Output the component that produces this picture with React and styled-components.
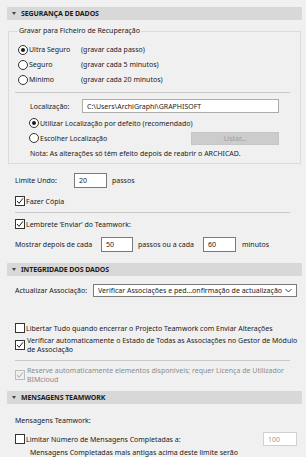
import styled, { createGlobalStyle } from 'styled-components';

const Global = createGlobalStyle`
  html, body {
    margin: 0;
    padding: 0;
    background: #f0f0f0;
  }
  body {
    font-family: "Noto Sans", "Open Sans", sans-serif;
    font-size: 7px;
    color: #1a1a1a;
    overflow: hidden;
  }
`;

const Panel = styled.div`
  width: 306px;
  height: 457px;
  box-sizing: border-box;
  padding: 7px 4px 0 7px;
  display: flex;
  flex-direction: column;
  overflow: hidden;
`;

const Header = styled.div`
  height: 13px;
  flex: none;
  margin-top: ${(p) => p.$mt || 0}px;
  background: #d8d8d8;
  border-radius: 1px;
  display: flex;
  align-items: center;
  gap: 5px;
  padding-left: 5px;
  font-weight: 700;
  font-size: 7px;
  letter-spacing: -0.1px;
  color: #1c1c1c;
`;

const Arrow = styled.span`
  width: 0;
  height: 0;
  border-left: 2.5px solid transparent;
  border-right: 2.5px solid transparent;
  border-top: 3px solid #444;
`;

const Group = styled.fieldset`
  margin: 7px 1px 0 1px;
  padding: 0 10px 4px 6px;
  border: 1px solid #dcdcdc;
  min-width: 0;
`;

const Legend = styled.legend`
  margin-left: 3px;
  padding: 0 1px;
  font-size: 7px;
  line-height: 8px;
  height: 8px;
`;

const Row = styled.div`
  display: flex;
  align-items: center;
  flex: none;
  height: ${(p) => p.$h || 14}px;
  margin-top: ${(p) => p.$mt || 0}px;
  padding-left: ${(p) => p.$pl || 0}px;
  padding-right: ${(p) => p.$pr || 0}px;
  white-space: nowrap;
`;

const TallRow = styled.div`
  display: flex;
  align-items: center;
  flex: none;
  margin-top: ${(p) => p.$mt || 0}px;
  padding-left: ${(p) => p.$pl || 0}px;
`;

const Text = styled.span`
  width: ${(p) => (p.$w ? `${p.$w}px` : 'auto')};
  margin-left: ${(p) => p.$ml || 0}px;
  flex: none;
  color: ${(p) => (p.$disabled ? '#8c8c8c' : 'inherit')};
  line-height: 9px;
`;

const Paragraph = styled.span`
  line-height: 9px;
  margin-left: 1px;
  color: ${(p) => (p.$disabled ? '#8c8c8c' : 'inherit')};
`;

const Rule = styled.div`
  height: 1px;
  flex: none;
  background: #c9c9c9;
  margin: ${(p) => p.$mt || 0}px ${(p) => p.$mr || 0}px 0 ${(p) => p.$ml || 0}px;
`;

const RadioDot = styled.span`
  width: 8px;
  height: 8px;
  flex: none;
  border-radius: 50%;
  border: 1px solid #333;
  background: #fff;
  box-sizing: content-box;
  display: flex;
  align-items: center;
  justify-content: center;
  margin-right: 1px;

  &::after {
    content: '';
    width: 4px;
    height: 4px;
    border-radius: 50%;
    background: ${(p) => (p.$on ? '#1a1a1a' : 'transparent')};
  }
`;

const Box = styled.span`
  width: 8px;
  height: 8px;
  flex: none;
  border: 1px solid ${(p) => (p.$disabled ? '#bcbcbc' : '#333')};
  background: ${(p) => (p.$disabled ? '#f0f0f0' : '#fff')};
  display: flex;
  align-items: center;
  justify-content: center;
  margin-right: 1px;
`;

const Field = styled.div`
  box-sizing: border-box;
  flex: none;
  width: ${(p) => p.$w}px;
  height: ${(p) => p.$h || 15}px;
  margin-left: ${(p) => (p.$push ? 'auto' : '0')};
  background: #fff;
  border: 1px solid ${(p) => (p.$disabled ? '#d0d0d0' : p.$light ? '#adadad' : '#7a7a7a')};
  color: ${(p) => (p.$disabled ? '#9a9a9a' : '#1a1a1a')};
  display: flex;
  align-items: center;
  padding-left: 4px;
`;

const Button = styled.div`
  box-sizing: border-box;
  width: 88px;
  height: 13px;
  margin-left: auto;
  background: #cccccc;
  border: 1px solid #c6c6c6;
  color: #9c9c9c;
  display: flex;
  align-items: center;
  justify-content: center;
`;

const Select = styled.div`
  box-sizing: border-box;
  width: 204px;
  height: 13px;
  flex: none;
  background: #fff;
  border: 1px solid #7a7a7a;
  display: flex;
  align-items: center;
  justify-content: space-between;
  padding: 0 4px;
`;

const Check = ({ disabled }) => (
  <svg width="8" height="8" viewBox="0 0 8 8">
    <polyline
      points="1,4 3,6.3 7,1.3"
      fill="none"
      stroke={disabled ? '#a8a8a8' : '#222'}
      strokeWidth="1"
    />
  </svg>
);

const Checkbox = ({ checked, disabled }) => (
  <Box $disabled={disabled}>{checked && <Check disabled={disabled} />}</Box>
);

const Chevron = () => (
  <svg width="7" height="5" viewBox="0 0 7 5">
    <polyline points="0.5,1 3.5,4 6.5,1" fill="none" stroke="#444" strokeWidth="1" />
  </svg>
);

const radios = [
  { label: 'Ultra Seguro', note: '(gravar cada passo)', on: true },
  { label: 'Seguro', note: '(gravar cada 5 minutos)' },
  { label: 'Mínimo', note: '(gravar cada 20 minutos)' },
];

export default function App() {
  return (
    <>
      <Global />
      <Panel>
        <Header>
          <Arrow />
          SEGURANÇA DE DADOS
        </Header>

        <Group>
          <Legend>Gravar para Ficheiro de Recuperação</Legend>
          {radios.map((r, i) => (
            <Row key={r.label} $h={15} $mt={i === 0 ? 7 : 0} $pl={3}>
              <RadioDot $on={r.on} />
              <Text $w={52}>{r.label}</Text>
              <Text>{r.note}</Text>
            </Row>
          ))}
          <Rule $mt={5} />
          <Row $mt={6} $pl={15} $pr={11}>
            <Text $w={52}>Localização:</Text>
            <Field $w={197} $h={14} $light>
              C:\Users\ArchiGraphi\GRAPHISOFT
            </Field>
          </Row>
          <Row $mt={3} $pl={14} $pr={11}>
            <RadioDot $on />
            <Text>Utilizar Localização por defeito (recomendado)</Text>
          </Row>
          <Row $mt={1} $pl={14} $pr={11}>
            <RadioDot />
            <Text>Escolher Localização</Text>
            <Button>Listar...</Button>
          </Row>
          <Row $h={12} $mt={2} $pl={15}>
            <Text>Nota: As alterações só têm efeito depois de reabrir o ARCHICAD.</Text>
          </Row>
        </Group>

        <Row $h={15} $mt={9} $pl={8}>
          <Text $w={59}>Limite Undo:</Text>
          <Field $w={33}>20</Field>
          <Text $ml={5}>passos</Text>
        </Row>
        <Row $mt={6} $pl={8}>
          <Checkbox checked />
          <Text>Fazer Cópia</Text>
        </Row>
        <Rule $mt={4} $ml={8} $mr={12} />
        <Row $mt={4} $pl={8}>
          <Checkbox checked />
          <Text>Lembrete ‘Enviar’ do Teamwork:</Text>
        </Row>
        <Row $h={15} $mt={6} $pl={8}>
          <Text $w={86}>Mostrar depois de cada</Text>
          <Field $w={32}>50</Field>
          <Text $w={65} $ml={5}>passos ou a cada</Text>
          <Field $w={33}>60</Field>
          <Text $ml={6}>minutos</Text>
        </Row>

        <Header $mt={11}>
          <Arrow />
          INTEGRIDADE DOS DADOS
        </Header>
        <Row $h={13} $mt={8} $pl={8}>
          <Text $w={78}>Actualizar Associação:</Text>
          <Select>
            <span>Verificar Associações e ped...onfirmação de actualização</span>
            <Chevron />
          </Select>
        </Row>
        <Row $mt={24} $pl={8}>
          <Checkbox />
          <Text>Libertar Tudo quando encerrar o Projecto Teamwork com Enviar Alterações</Text>
        </Row>
        <TallRow $mt={1} $pl={8}>
          <Checkbox checked />
          <Paragraph>
            Verificar automaticamente o Estado de Todas as Associações no Gestor de Módulo
            <br />
            de Associação
          </Paragraph>
        </TallRow>
        <Rule $mt={6} $ml={8} $mr={12} />
        <TallRow $mt={5} $pl={8}>
          <Checkbox checked disabled />
          <Paragraph $disabled>
            Reserve automaticamente elementos disponíveis; requer Licença de Utilizador
            <br />
            BIMcloud
          </Paragraph>
        </TallRow>

        <Header $mt={7}>
          <Arrow />
          MENSAGENS TEAMWORK
        </Header>
        <Row $h={12} $mt={10} $pl={8}>
          <Text>Mensagens Teamwork:</Text>
        </Row>
        <Row $mt={6} $pl={8} $pr={5}>
          <Checkbox />
          <Text>Limitar Número de Mensagens Completadas a:</Text>
          <Field $w={34} $h={14} $push $disabled>
            100
          </Field>
        </Row>
        <Row $h={10} $mt={1} $pl={23}>
          <Text>Mensagens Completadas mais antigas acima deste limite serão</Text>
        </Row>
      </Panel>
    </>
  );
}
